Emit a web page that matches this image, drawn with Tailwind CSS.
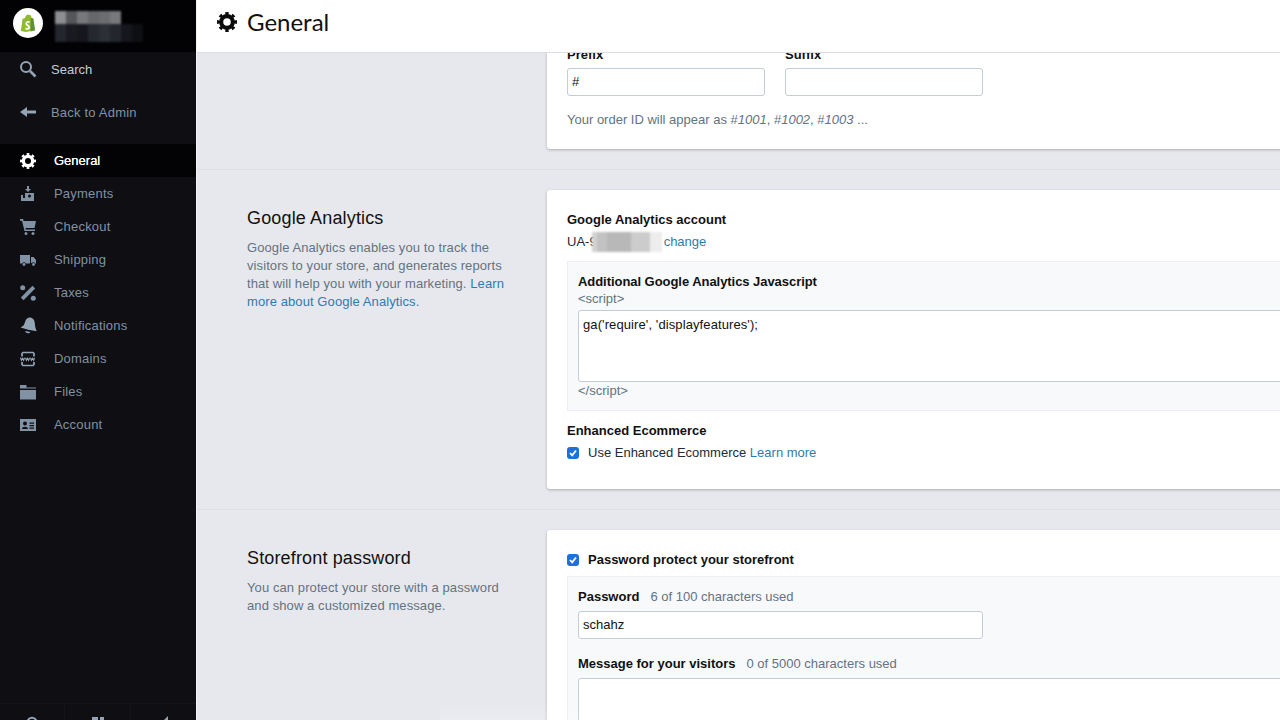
<!DOCTYPE html>
<html>
<head>
<meta charset="utf-8">
<script src="https://cdn.jsdelivr.net/npm/@tailwindcss/browser@4"></script>
</head>
<body class="m-0 overflow-hidden bg-[#e7e8ed] font-['Liberation_Sans',Arial,sans-serif] text-[13px] leading-[18px] text-[#212b36]">
<div class="flex h-[720px] w-[1280px] overflow-hidden">
  <!-- Sidebar -->
  <aside class="flex h-full w-[197px] shrink-0 flex-col overflow-hidden border-r border-[#f3f3f6] bg-[#0e0e13] text-[#8192a4]">
    <div class="flex h-[52px] shrink-0 gap-[12px] bg-[#020204] pt-[8px] pl-[13px]">
      <div class="flex h-[30px] w-[30px] items-center justify-center rounded-full bg-white">
        <svg width="16" height="18" viewBox="0 0 16 18"><path d="M2.600 4.800 5 4c.5-2 1.700-3.500 3.200-3.500.6 0 1 .3 1.300.7l1.200-.3 1 3.200 1.600.3L15 16.300 5.800 18 .8 17Z" fill="#8fbb2f"/><path d="m10.600 4.300.9-.1 1.700.3 1.800 11.800-4.400 1.200Z" fill="#5e8e3e"/><path d="M9.900 7.300 9.300 9c-1.300-.6-2.300-.2-2.300.5 0 1 3 1.300 3 3.900 0 2.300-2.800 3.100-4.800 1.800l.5-1.600c1 .7 2.400.8 2.400-.1 0-1.200-2.700-1.500-2.700-3.700 0-2.500 2.800-3.500 4.500-2.500Z" fill="#fff"/></svg>
      </div>
      <div class="flex flex-col pt-[3px] blur-[1px]">
        <div class="flex h-[13px]">
          <div class="w-[11px] bg-[#8d8e92]"></div><div class="w-[11px] bg-[#55565a]"></div><div class="w-[11px] bg-[#77787c]"></div><div class="w-[11px] bg-[#66676b]"></div><div class="w-[11px] bg-[#6c6d71]"></div><div class="w-[11px] bg-[#77787c]"></div>
        </div>
        <div class="flex h-[18px]">
          <div class="w-[11px] bg-[#23262c]"></div><div class="w-[11px] bg-[#181a20]"></div><div class="w-[11px] bg-[#15171d]"></div><div class="w-[11px] bg-[#252830]"></div><div class="w-[11px] bg-[#2c2f36]"></div><div class="w-[11px] bg-[#23262c]"></div><div class="w-[11px] bg-[#15171c]"></div><div class="w-[11px] bg-[#0e0f13]"></div>
        </div>
      </div>
    </div>
    <nav class="flex flex-col tracking-[0.2px]">
      <a class="flex h-[34px] items-center gap-[14px] pt-[1px] pl-[19px] tracking-normal text-[#c4cdd5]">
        <svg class="-mt-[2px]" width="18" height="18" viewBox="0 0 18 18" fill="none" stroke="#93a4b5"><circle cx="7" cy="7" r="5" stroke-width="2"/><path d="m11 11 5.500 5.500" stroke-width="2.600"/></svg>
        <span>Search</span>
      </a>
      <a class="mt-[9px] flex h-[34px] items-center gap-[14px] pt-[1px] pl-[19px]">
        <svg class="-mt-[1px]" width="18" height="18" viewBox="0 0 18 18" fill="#93a4b5"><path d="M1 9 8 4v3.600h9v2.800H8V14Z"/></svg>
        <span>Back to Admin</span>
      </a>
      <a class="mt-[15px] flex h-[33px] items-center gap-[18px] bg-[#030305] pl-[20px] tracking-normal text-white">
        <svg width="16" height="16" viewBox="0 0 24 24" fill="none" stroke="#fff"><circle cx="12" cy="12" r="7" stroke-width="5"/><circle cx="12" cy="12" r="10" stroke-width="4" pathLength="16" stroke-dasharray="1 1" stroke-dashoffset="0.500"/></svg>
        <span class="font-medium [text-shadow:0_0_.4px_#fff]">General</span>
      </a>
      <a class="flex h-[33px] items-center gap-[18px] pl-[20px]">
        <svg width="16" height="16" viewBox="0 0 16 16" fill="#8192a4"><path d="M7 0h2v3h2L8 6 5 3h2Z"/><path d="M5 7h9v6H5Zm4.500 1.500a1.500 1.500 0 1 0 0 3 1.500 1.500 0 0 0 0-3Z" fill-rule="evenodd"/><path d="M1 9h2v3h11v3H1Z"/></svg>
        <span>Payments</span>
      </a>
      <a class="flex h-[33px] items-center gap-[18px] pl-[20px]">
        <svg width="16" height="16" viewBox="0 0 16 16" fill="#8192a4"><path d="M0 0h3l.7 2H16l-1.500 7H5.500l.3 1.500H15V12H4.500L2 1.700H0Z"/><circle cx="6" cy="14.500" r="1.500"/><circle cx="13" cy="14.500" r="1.500"/></svg>
        <span>Checkout</span>
      </a>
      <a class="flex h-[33px] items-center gap-[18px] pl-[20px]">
        <svg width="16" height="16" viewBox="0 0 16 16" fill="#8192a4"><path d="M0 3h10v8.500H5.800a2 2 0 0 0-3.600 0H0Z"/><path d="M11 5h2.500L16 8v3.500h-.8a2 2 0 0 0-3.400-.5H11Z"/><circle cx="4" cy="12.500" r="1.400"/><circle cx="13.500" cy="12.500" r="1.400"/></svg>
        <span>Shipping</span>
      </a>
      <a class="flex h-[33px] items-center gap-[18px] pl-[20px]">
        <svg width="16" height="16" viewBox="0 0 16 16" fill="#8192a4"><circle cx="2.700" cy="2.700" r="2.500"/><circle cx="13.300" cy="13.300" r="2.500"/><path d="M12.500.8 15.200 3.500 3.500 15.200.8 12.500Z"/></svg>
        <span>Taxes</span>
      </a>
      <a class="flex h-[33px] items-center gap-[18px] pl-[20px]">
        <svg width="17" height="17" viewBox="0 0 16 16" fill="#93a4b5"><path d="M8.500.5c2.700-.3 4.800 1.500 5.200 4l.8 5.500 1.200 3.400-8-1.400L.5 9.800c2.200-.8 3.200-1.800 4-4.300C5.100 3 6.300 1 8.500.5Z"/><path d="M4.800 13.200 9.800 14c-.7 1.800-4.300 1.800-5-.8Z"/></svg>
        <span class="-ml-[1px]">Notifications</span>
      </a>
      <a class="flex h-[33px] items-center gap-[18px] pl-[20px]">
        <svg width="16" height="16" viewBox="0 0 16 16" fill="none" stroke="#93a4b5"><path d="M2 5.500V2.500L3 1.500h10l1 1v3M2 11v2.500l1 1h10l1-1V11" stroke-width="1.700"/><path d="m.5 6.700.9 2.600 1.100-2 1.100 2 .9-2.600m1 0 .9 2.600 1.100-2 1.100 2 .9-2.600m1 0 .9 2.600 1.100-2 1.100 2 .9-2.600" stroke-width="1.100"/></svg>
        <span>Domains</span>
      </a>
      <a class="flex h-[33px] items-center gap-[18px] pl-[20px]">
        <svg width="16" height="16" viewBox="0 0 16 16" fill="#8192a4"><path d="M0 1h6.500v2.500H16v1H0Z"/><path d="M0 6h16v9.500H0Z"/></svg>
        <span>Files</span>
      </a>
      <a class="flex h-[33px] items-center gap-[18px] pl-[20px]">
        <svg width="16" height="16" viewBox="0 0 16 16"><path d="M0 2h16v12H0Z" fill="#8192a4"/><circle cx="5" cy="6.500" r="2" fill="#0e0e13"/><path d="M2 12c0-3 6-3 6 0ZM9.500 5.500H14v1.300H9.500Zm0 2.500H14v1.300H9.500Zm0 2.500H14v1.300H9.500Z" fill="#0e0e13"/></svg>
        <span>Account</span>
      </a>
    </nav>
    <div class="mt-auto flex h-[17px] shrink-0 border-t border-[#131318]">
      <div class="flex w-[65px] justify-center border-r border-[#131318] pt-[12px]">
        <svg class="shrink-0" width="12" height="12" viewBox="0 0 14 14" fill="none" stroke="#93a4b5" stroke-width="2.500"><circle cx="7" cy="7" r="5"/></svg>
      </div>
      <div class="flex w-[66px] justify-center border-r border-[#131318] pt-[12px]">
        <svg class="shrink-0" width="16" height="14" viewBox="0 0 16 14" fill="#93a4b5"><path d="M2 1h6v3H2Zm8 0h4v8h-4Z"/></svg>
      </div>
      <div class="flex w-[65px] justify-center pt-[11px]">
        <svg class="shrink-0" width="14" height="14" viewBox="0 0 14 14" fill="#93a4b5"><path d="M11 1v9H2Z"/></svg>
      </div>
    </div>
  </aside>

  <!-- Main -->
  <div class="relative flex h-full min-w-0 flex-1 flex-col overflow-hidden">
    <header class="relative z-10 flex h-[53px] shrink-0 items-center gap-[10px] border-b border-[#dcdde2] bg-white pb-[9px] pl-[20px]">
      <svg width="20" height="20" viewBox="0 0 24 24" fill="none" stroke="#0b0b0b"><circle cx="12" cy="12" r="7" stroke-width="5"/><circle cx="12" cy="12" r="10" stroke-width="4" pathLength="16" stroke-dasharray="1 1" stroke-dashoffset="0.500"/></svg>
      <h1 class="font-['Lato',sans-serif] text-[24px] leading-[30px] font-normal text-[#111]">General</h1>
    </header>
    <main class="mt-[-28px] flex flex-col">
      <!-- Section 1 -->
      <section class="flex border-b border-[#dfe0e5] pb-[20px] pl-[350px]">
        <div class="w-[800px] shrink-0 rounded-[3px] bg-white px-[20px] pt-[20px] pb-[21px] shadow-[0_1px_3px_rgba(0,0,0,0.25)]">
          <div class="flex gap-[20px]">
            <div class="flex w-[198px] flex-col gap-[4px]">
              <span class="pt-[1px] font-bold text-[#111]">Prefix</span>
              <div class="flex h-[28px] items-center rounded-[3px] border border-[#c4cdd5] px-[4px] text-[#111]">#</div>
            </div>
            <div class="flex w-[198px] flex-col gap-[4px]">
              <span class="pt-[1px] font-bold text-[#111]">Suffix</span>
              <div class="h-[28px] rounded-[3px] border border-[#c4cdd5]"></div>
            </div>
          </div>
          <p class="mt-[15px] -mb-[1px] text-[#637381]">Your order ID will appear as #<i>1001</i>, #<i>1002</i>, #<i>1003</i> ...</p>
        </div>
      </section>
      <!-- Section 2 -->
      <section class="flex border-b border-[#dfe0e5] py-[20px] pl-[50px]">
        <div class="w-[300px] shrink-0 pt-[16px]">
          <h2 class="text-[18px] leading-[24px] font-normal tracking-[0.15px] text-[#111]">Google Analytics</h2>
          <p class="mt-[9px] w-[262px] tracking-[0.09px] text-[#637381]">Google Analytics enables you to track the visitors to your store, and generates reports that will help you with your marketing. <a class="text-[#2f7bb0]">Learn more about Google Analytics.</a></p>
        </div>
        <div class="w-[800px] shrink-0 rounded-[3px] bg-white px-[20px] pt-[21px] pb-[27px] shadow-[0_1px_3px_rgba(0,0,0,0.25)]">
          <div class="font-bold text-[#111]">Google Analytics account</div>
          <div class="relative mt-[4px] flex text-[#212b36]">
            <span>UA-9</span>
            <span class="ml-[23px] pl-[44px] text-[#2f7bb0]">change</span>
            <div class="absolute -top-[1px] left-[25px] flex h-[20px] blur-[1.200px]">
              <div class="w-[5px] bg-[#d2d2d2]"></div><div class="w-[10px] bg-[#c2c2c2]"></div><div class="w-[24px] bg-[#b8b8b8]"></div><div class="w-[19px] bg-[#cccccc]"></div><div class="w-[12px] bg-[#ededed]"></div>
            </div>
          </div>
          <div class="mt-[10px] border border-[#eceef2] bg-[#f8f9fb] p-[10px]">
            <div class="pt-[1px] font-bold tracking-[-0.05px] text-[#111]">Additional Google Analytics Javascript</div>
            <div class="-mt-[1px] text-[#637381]">&lt;script&gt;</div>
            <div class="mt-[2px] h-[72px] rounded-[3px] border border-[#c4cdd5] bg-white px-[4px] py-[5px] tracking-[0.1px] text-[#111]">ga('require', 'displayfeatures');</div>
            <div class="text-[#637381]">&lt;/script&gt;</div>
          </div>
          <div class="mt-[11px] font-bold text-[#111]">Enhanced Ecommerce</div>
          <div class="mt-[4px] flex items-center gap-[9px]">
            <span class="flex h-[12px] w-[12px] items-center justify-center rounded-[3px] bg-[#1d6fdc]">
              <svg width="10" height="10" viewBox="0 0 10 10" fill="none" stroke="#fff" stroke-width="1.800"><path d="m2 5 2.200 2.300L8 2.500"/></svg>
            </span>
            <span class="text-[#212b36]">Use Enhanced Ecommerce <a class="text-[#2f7bb0]">Learn more</a></span>
          </div>
        </div>
      </section>
      <!-- Section 3 -->
      <section class="flex py-[20px] pl-[50px]">
        <div class="w-[300px] shrink-0 pt-[16px]">
          <h2 class="text-[18px] leading-[24px] font-normal tracking-[0.15px] text-[#111]">Storefront password</h2>
          <p class="mt-[9px] w-[262px] tracking-[0.09px] text-[#637381]">You can protect your store with a password and show a customized message.</p>
        </div>
        <div class="w-[800px] shrink-0 rounded-[3px] bg-white px-[20px] pt-[21px] pb-[28px] shadow-[0_1px_3px_rgba(0,0,0,0.25)]">
          <div class="flex items-center gap-[9px]">
            <span class="flex h-[12px] w-[12px] items-center justify-center rounded-[3px] bg-[#1d6fdc]">
              <svg width="10" height="10" viewBox="0 0 10 10" fill="none" stroke="#fff" stroke-width="1.800"><path d="m2 5 2.200 2.300L8 2.500"/></svg>
            </span>
            <span class="font-bold text-[#111]">Password protect your storefront</span>
          </div>
          <div class="mt-[7px] border border-[#eceef2] bg-[#f8f9fb] p-[10px]">
            <div class="flex gap-[11px] pt-[1px]"><span class="font-bold text-[#111]">Password</span><span class="text-[#637381]">6 of 100 characters used</span></div>
            <div class="mt-[5px] flex h-[28px] w-[405px] items-center rounded-[3px] border border-[#c4cdd5] bg-white px-[4px] text-[#111]">schahz</div>
            <div class="mt-[16px] flex gap-[11px]"><span class="font-bold text-[#111]">Message for your visitors</span><span class="text-[#637381]">0 of 5000 characters used</span></div>
            <div class="mt-[5px] h-[100px] rounded-[3px] border border-[#c4cdd5] bg-white"></div>
          </div>
        </div>
      </section>
    </main>
    <div class="absolute right-0 bottom-0 h-[20px] w-[840px] bg-gradient-to-b from-white/0 to-white/15"></div>
  </div>
</div>
</body>
</html>
